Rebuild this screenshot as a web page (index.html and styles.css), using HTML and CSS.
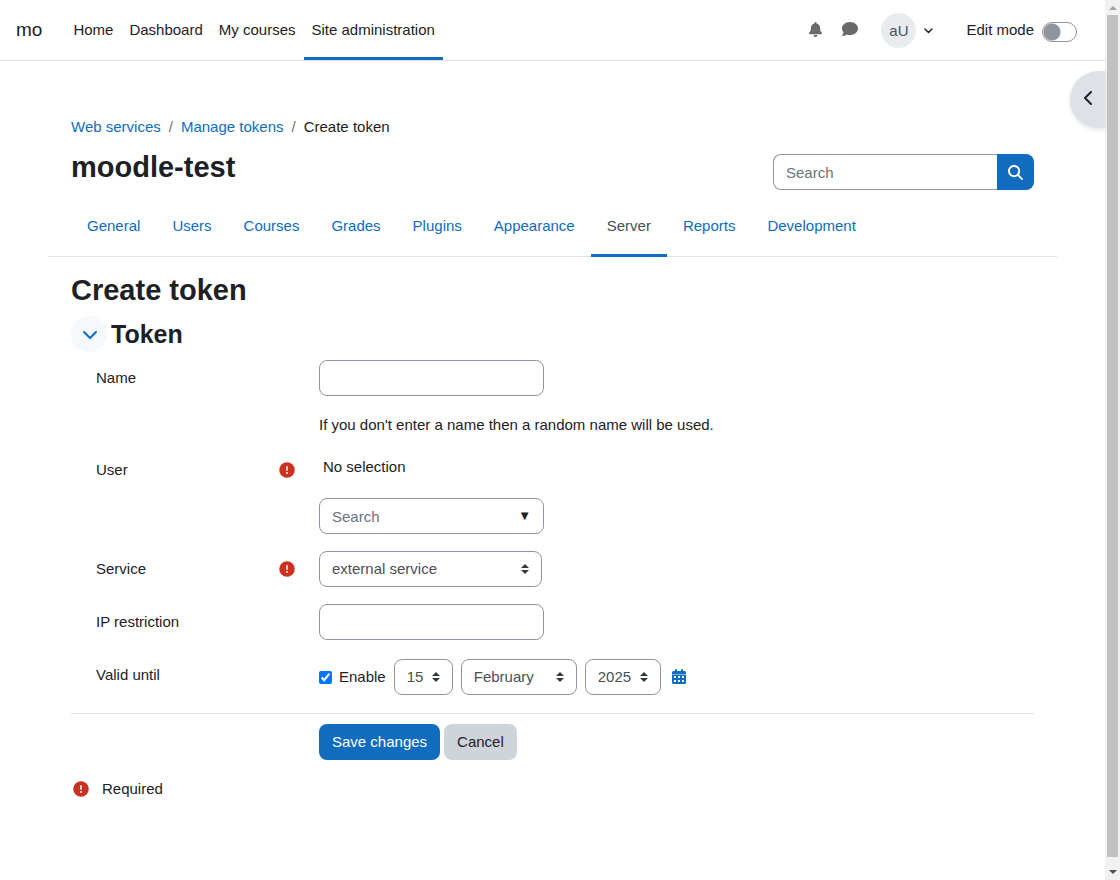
FILE: index.html
```html
<!DOCTYPE html>
<html lang="en">
<head>
  <meta charset="UTF-8" />
  <title>Create token | moodle-test</title>
  <meta name="viewport" content="width=device-width, initial-scale=1" />
  <link rel="stylesheet" href="styles.css">
</head>
<body>
  <!-- shared icons -->
  <svg class="sprite" aria-hidden="true">
    <symbol id="icon-required" viewBox="0 0 512 512">
      <path fill="#ca3120" d="M256 504A248 248 0 1 0 256 8a248 248 0 1 0 0 496z" />
      <path fill="#fff" d="M256 128c13.3 0 24 10.7 24 24l0 112c0 13.3-10.7 24-24 24s-24-10.7-24-24l0-112c0-13.3 10.7-24 24-24zM224 352a32 32 0 1 1 64 0 32 32 0 1 1-64 0z" />
    </symbol>
  </svg>

  <div class="page">
    <header class="navbar">
      <a href="#" class="brand">mo</a>
      <nav class="primary-nav">
        <a href="#">Home</a>
        <a href="#">Dashboard</a>
        <a href="#">My courses</a>
        <a href="#" class="active">Site administration</a>
      </nav>
      <div class="user-nav">
        <button class="icon-btn" aria-label="Notifications">
          <svg width="13" height="15" viewBox="0 0 448 512"><path d="M224 0c-17.7 0-32 14.3-32 32l0 19.2C119 66 64 130.6 64 208l0 18.8c0 47-17.3 92.4-48.5 127.6l-7.400 8.300c-8.400 9.400-10.400 22.900-5.300 34.400S19.400 416 32 416l384 0c12.600 0 24-7.400 29.200-18.900s3.100-25-5.300-34.400l-7.400-8.300C401.300 319.200 384 273.900 384 226.800l0-18.800c0-77.400-55-142-128-156.800L256 32c0-17.700-14.300-32-32-32zm45.300 493.300c12-12 18.700-28.300 18.700-45.300l-128 0c0 17 6.700 33.300 18.700 45.300s28.300 18.700 45.300 18.700s33.300-6.700 45.300-18.700z" /></svg>
        </button>
        <button class="icon-btn" aria-label="Messages">
          <svg width="16" height="16" viewBox="0 0 512 512"><path d="M512 240c0 114.900-114.600 208-256 208c-37.100 0-72.300-6.400-104.100-17.900c-11.900 8.700-31.300 20.600-54.300 30.600C73.600 471.100 44.700 480 16 480c-6.500 0-12.300-3.900-14.800-9.900c-2.500-6-1.100-12.800 3.400-17.400l.3-.3c.3-.3 .7-.7 1.300-1.400c1.100-1.200 2.800-3.100 4.900-5.700c4.100-5 9.600-12.400 15.200-21.600c10-16.600 19.500-38.400 21.400-62.900C17.700 326.800 0 285.100 0 240C0 125.100 114.600 32 256 32s256 93.100 256 208z" /></svg>
        </button>
        <button class="user-menu" aria-label="User menu">
          <span class="avatar">aU</span>
          <svg width="9" height="6" viewBox="0 0 9 6"><path d="M1 1l3.500 3.500L8 1" /></svg>
        </button>
        <label class="edit-mode">
          Edit mode
          <input type="checkbox" class="switch" />
        </label>
      </div>
    </header>

    <button class="drawer-toggle" aria-label="Open block drawer">
      <svg width="9" height="14" viewBox="0 0 9 14"><path d="M8 1L2 7l6 6" /></svg>
    </button>

    <main class="main">
      <nav class="breadcrumb">
        <a href="#">Web services</a>
        <span class="divider">/</span>
        <a href="#">Manage tokens</a>
        <span class="divider">/</span>
        <span>Create token</span>
      </nav>

      <div class="page-header">
        <h1>moodle-test</h1>
        <form class="site-search">
          <input type="text" placeholder="Search" aria-label="Search" />
          <button type="button" aria-label="Search">
            <svg width="15" height="15" viewBox="0 0 512 512"><path d="M416 208c0 45.900-14.900 88.300-40 122.700L502.600 457.400c12.500 12.500 12.500 32.800 0 45.300s-32.800 12.500-45.300 0L330.700 376c-34.400 25.200-76.800 40-122.700 40C93.100 416 0 322.900 0 208S93.100 0 208 0S416 93.100 416 208zM208 352a144 144 0 1 0 0-288 144 144 0 1 0 0 288z" /></svg>
          </button>
        </form>
      </div>

      <nav class="tabs">
        <a href="#">General</a>
        <a href="#">Users</a>
        <a href="#">Courses</a>
        <a href="#">Grades</a>
        <a href="#">Plugins</a>
        <a href="#">Appearance</a>
        <a href="#" class="active">Server</a>
        <a href="#">Reports</a>
        <a href="#">Development</a>
      </nav>

      <h2>Create token</h2>

      <form class="token-form">
        <div class="section-title">
          <button type="button" class="collapse-btn" aria-label="Collapse">
            <svg width="16" height="10" viewBox="0 0 16 10"><path d="M2 2l6 6 6-6" /></svg>
          </button>
          <h3>Token</h3>
        </div>

        <div class="fields">
          <div class="row">
            <div class="row-label"><label for="name">Name</label></div>
            <input type="text" id="name" class="control" />
          </div>

          <p class="hint">If you don't enter a name then a random name will be used.</p>

          <div class="row">
            <div class="row-label">
              <label for="user">User</label>
              <svg class="required"><use href="#icon-required" /></svg>
            </div>
            <div>
              <div class="selection">No selection</div>
              <div class="autocomplete">
                <input type="text" id="user" class="control" placeholder="Search" />
                <span class="arrow">▼</span>
              </div>
            </div>
          </div>

          <div class="row">
            <div class="row-label">
              <label for="service">Service</label>
              <svg class="required"><use href="#icon-required" /></svg>
            </div>
            <select id="service" class="control service">
              <option>external service</option>
            </select>
          </div>

          <div class="row">
            <div class="row-label"><label for="ip">IP restriction</label></div>
            <input type="text" id="ip" class="control" />
          </div>

          <div class="row">
            <div class="row-label"><span>Valid until</span></div>
            <div class="date">
              <label class="enable"><input type="checkbox" checked /> Enable</label>
              <select class="control day" aria-label="Day"><option>15</option></select>
              <select class="control month" aria-label="Month"><option>February</option></select>
              <select class="control year" aria-label="Year"><option>2025</option></select>
              <a href="#" class="calendar" aria-label="Calendar">
                <svg width="14" height="16" viewBox="0 0 14 16"><path fill-rule="evenodd" d="M3 1a1 1 0 0 1 2 0v1h4V1a1 1 0 0 1 2 0v1h1.500A1.500 1.500 0 0 1 14 3.500V5H0V3.500A1.500 1.500 0 0 1 1.500 2H3zM0 5.500h14v8a1.500 1.500 0 0 1-1.500 1.500h-11A1.500 1.500 0 0 1 0 13.500zM2 7v2h2V7zm4 0v2h2V7zm4 0v2h2V7zM2 11v2h2v-2zm4 0v2h2v-2zm4 0v2h2v-2z" /></svg>
              </a>
            </div>
          </div>
        </div>

        <div class="actions">
          <button type="button" class="btn btn-primary">Save changes</button>
          <button type="button" class="btn btn-secondary">Cancel</button>
        </div>

        <div class="required-note">
          <svg class="required"><use href="#icon-required" /></svg>
          <span>Required</span>
        </div>
      </form>
    </main>
  </div>

  <div class="scrollbar" aria-hidden="true">
    <svg width="15" height="15" viewBox="0 0 15 15"><path fill="#a3a3a3" d="M4 10l4-4 4 4z" /></svg>
    <div class="thumb"></div>
    <svg width="15" height="15" viewBox="0 0 15 15"><path fill="#505050" d="M4 5h8l-4 4z" /></svg>
  </div>
</body>
</html>
```
FILE: styles.css
```css
* {
  box-sizing: border-box;
}

body {
  margin: 0;
  display: flex;
  min-height: 100vh;
  font-family: "Liberation Sans", Arial, sans-serif;
  font-size: 15px;
  line-height: 22px;
  color: #1d2125;
  background-color: #fff;
}

a {
  color: #0f6cbf;
  text-decoration: none;
}

h1, h2, h3, p {
  margin: 0;
}

h1, h2 {
  font-size: 29px;
  line-height: 34px;
}

h3 {
  font-size: 26px;
  line-height: 36px;
}

button, input, select {
  font: inherit;
  color: inherit;
}

button {
  padding: 0;
  border: none;
  background: none;
  cursor: pointer;
}

.sprite {
  position: absolute;
  width: 0;
  height: 0;
}

.page {
  flex: 1;
  position: relative;
}

/* top bar */
.navbar {
  display: flex;
  align-items: stretch;
  height: 61px;
  padding: 0 28px 0 16px;
  border-bottom: 1px solid #dee2e6;
}

.brand {
  font-size: 19px;
  line-height: 60px;
  color: #1d2125;
  margin-right: 23px;
}

.primary-nav {
  display: flex;
}

.primary-nav a {
  padding: 0 8px;
  line-height: 60px;
  color: #1d2125;
}

.primary-nav a.active {
  box-shadow: inset 0 -3px #0f6cbf;
}

.user-nav {
  display: flex;
  align-items: center;
  margin-left: auto;
}

.icon-btn {
  display: flex;
  align-items: center;
  height: 18px;
  margin: 0 20px 2px 0;
  fill: #6a6a6a;
}

.user-menu {
  display: flex;
  align-items: center;
  gap: 8px;
  margin: 0 33px 0 3px;
}

.user-menu svg, .drawer-toggle svg, .collapse-btn svg {
  fill: none;
  stroke: #1d2125;
  stroke-width: 2;
  stroke-linecap: round;
  stroke-linejoin: round;
}

.user-menu svg {
  margin-top: 2px;
  stroke-width: 1.5;
}

.avatar {
  width: 35px;
  height: 35px;
  border-radius: 50%;
  background-color: #e9ecef;
  line-height: 35px;
  text-align: center;
  color: #495057;
}

.edit-mode {
  display: flex;
  align-items: center;
  gap: 8px;
}

.switch {
  appearance: none;
  width: 35px;
  height: 20px;
  margin: 3px 0 0;
  border: 1px solid #8f959e;
  border-radius: 10px;
  background: radial-gradient(circle at 9px 9px, #8f959e 8px, #fff 9px);
}

.drawer-toggle {
  position: absolute;
  top: 71px;
  right: 0;
  width: 35px;
  height: 57px;
  border-radius: 29px 0 0 29px;
  background-color: #dee2e6;
  box-shadow: 0 2px 4px rgba(0, 0, 0, 0.1);
}

/* content */
.main {
  margin: 0 48px;
  padding: 55px 23px 80px;
}

.breadcrumb {
  display: flex;
  gap: 8px;
}

.breadcrumb .divider {
  color: #6a737b;
}

.page-header {
  display: flex;
  justify-content: space-between;
  align-items: flex-start;
  padding-top: 12px;
}

.site-search {
  display: flex;
  margin-top: 4px;
}

.site-search input {
  width: 225px;
  height: 36px;
  padding: 0 12px;
  border: 1px solid #8f959e;
  border-right: none;
  border-radius: 8px 0 0 8px;
}

.site-search button {
  display: flex;
  align-items: center;
  justify-content: center;
  width: 37px;
  margin-left: -1px;
  border-radius: 0 8px 8px 0;
  background-color: #0f6cbf;
  fill: #fff;
}

input::placeholder {
  color: #6a737b;
}

.tabs {
  display: flex;
  margin: 6px -23px 0;
  padding: 0 23px;
  border-bottom: 1px solid #dee2e6;
}

.tabs a {
  padding: 0 16px;
  line-height: 60px;
}

.tabs a.active {
  color: #495057;
  margin-bottom: -1px;
  border-bottom: 3px solid #0f6cbf;
  height: 61px;
}

h2 {
  margin-top: 16px;
}

.section-title {
  display: flex;
  align-items: center;
  gap: 4px;
  margin-top: 9px;
}

.section-title h3 {
  font-size: 25px;
}

.collapse-btn {
  display: flex;
  align-items: center;
  justify-content: center;
  width: 36px;
  height: 36px;
  padding: 2px 0 0 2px;
  border-radius: 50%;
  background-color: #f5f9fc;
}

.collapse-btn svg {
  stroke: #0f6cbf;
}

/* form */
.fields {
  padding: 8px 0 18px 25px;
  border-bottom: 1px solid #dee2e6;
}

.row {
  display: grid;
  grid-template-columns: 223px 1fr;
  justify-items: start;
  margin-bottom: 17px;
}

.row:last-child {
  margin-bottom: 0;
}

.row-label {
  display: flex;
  justify-content: space-between;
  align-items: center;
  justify-self: stretch;
  height: 36px;
  padding-right: 24px;
}

.required {
  width: 16px;
  height: 16px;
}

.control {
  width: 225px;
  height: 36px;
  padding: 0 12px;
  border: 1px solid #8f959e;
  border-radius: 8px;
  background-color: #fff;
}

select.control {
  appearance: none;
  color: #495057;
  background-image: url("data:image/svg+xml,%3Csvg xmlns='http://www.w3.org/2000/svg' viewBox='0 0 8 10'%3E%3Cpath fill='%23343a40' d='M0 4l4-4 4 4zM0 6h8l-4 4z'/%3E%3C/svg%3E");
  background-repeat: no-repeat;
  background-position: right 12px center;
  background-size: 8px 10px;
}

select.service {
  width: 223px;
}

.hint {
  padding-top: 1px;
  margin: 0 0 16px 223px;
}

.selection {
  padding: 4px;
  margin-bottom: 16px;
}

.autocomplete {
  position: relative;
}

.arrow {
  position: absolute;
  top: 7px;
  right: 13px;
  font-size: 13px;
}

.date {
  display: flex;
  align-items: center;
  gap: 8px;
  padding-top: 2px;
}

.enable {
  display: flex;
  align-items: center;
  gap: 7px;
}

.enable input {
  width: 13px;
  height: 13px;
  margin: 0;
}

select.day {
  width: 59px;
}

select.month {
  width: 116px;
}

select.year {
  width: 76px;
}

select.day, select.month, select.year {
  padding-right: 0;
}

.calendar {
  display: flex;
  padding-left: 3px;
  fill: #0f6cbf;
}

.actions {
  display: flex;
  gap: 4px;
  margin: 10px 0 0 248px;
}

.btn {
  height: 36px;
  padding: 0 13px;
  border-radius: 8px;
}

.btn-primary {
  color: #fff;
  background-color: #0f6cbf;
}

.btn-secondary {
  background-color: #ced4da;
}

.required-note {
  display: flex;
  align-items: center;
  gap: 13px;
  padding-left: 2px;
  margin-top: 18px;
}

/* page scrollbar */
.scrollbar {
  display: flex;
  flex-direction: column;
  width: 15px;
  background-color: #f1f1f1;
}

.thumb {
  flex: 1;
  margin: 0 2px 8px;
  background-color: #c1c1c1;
}
```
